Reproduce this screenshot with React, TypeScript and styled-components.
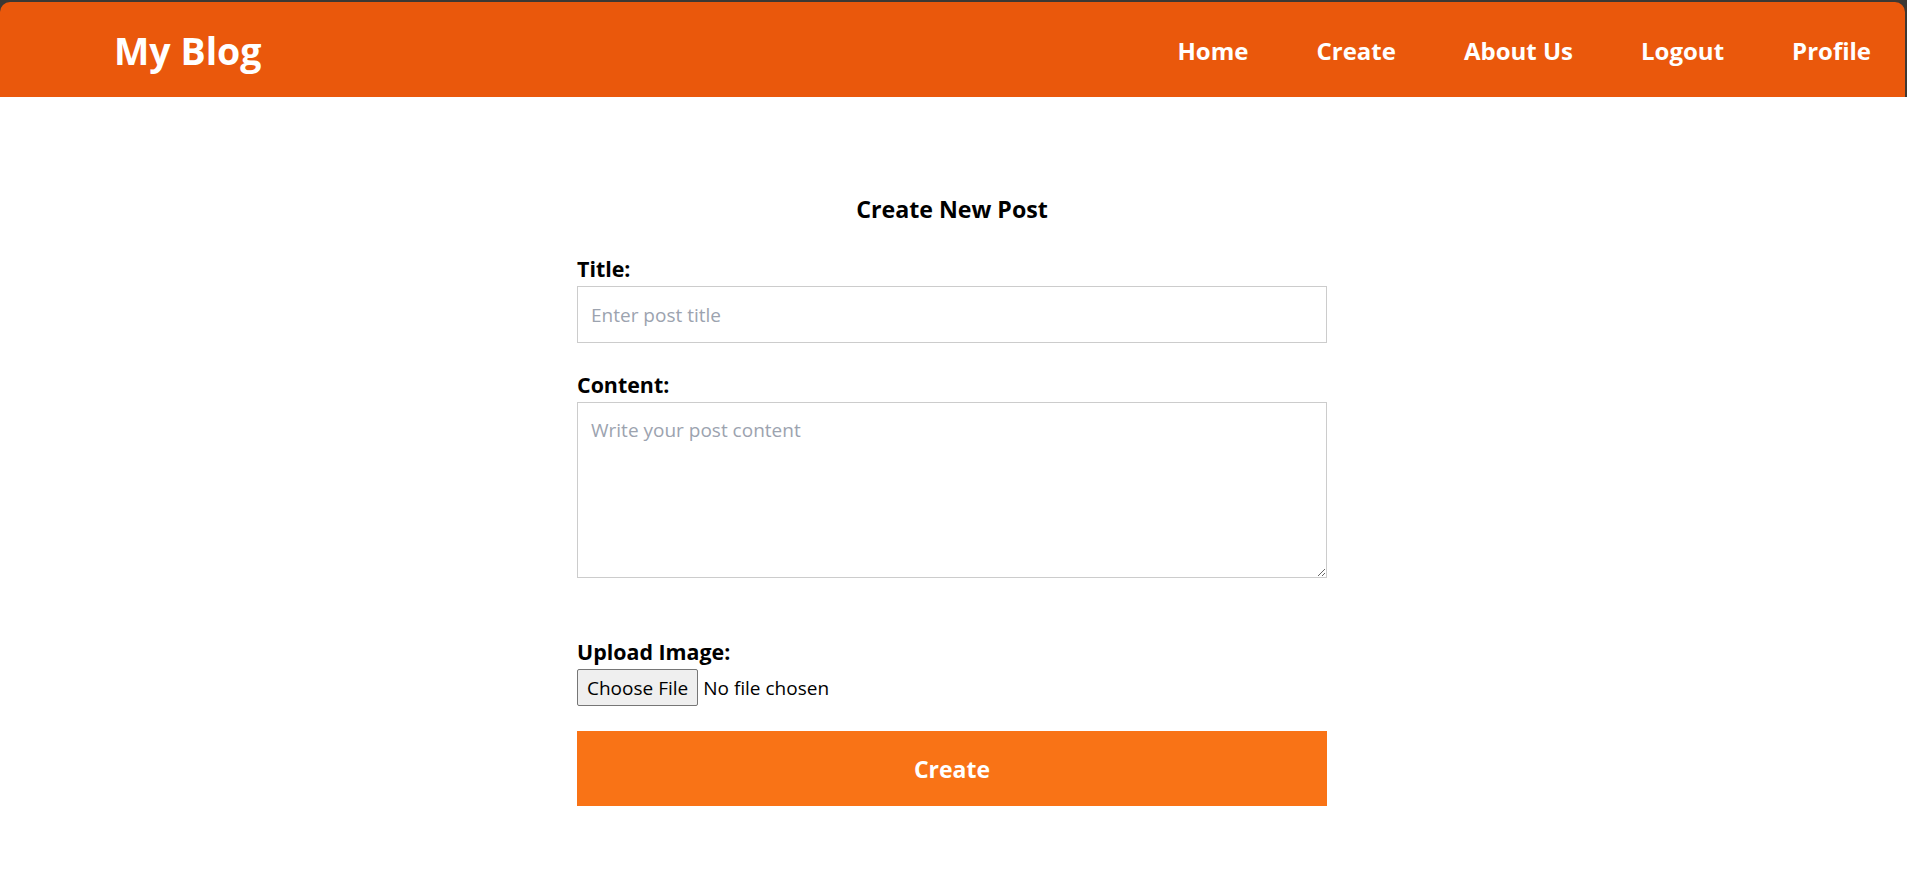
import React from "react";
import styled, { createGlobalStyle } from "styled-components";

const GlobalStyle = createGlobalStyle`
  html, body {
    margin: 0;
    padding: 0;
    background: #ffffff;
  }
  body {
    font-family: "Open Sans", "Noto Sans", sans-serif;
    color: #000000;
  }
  * {
    box-sizing: border-box;
  }
`;

const Frame = styled.div`
  background: #3c3834;
  padding: 2px 2px 0 0;
`;

const Header = styled.header`
  height: 95px;
  background: #ea580c;
  border-radius: 10px 10px 0 0;
  display: flex;
  align-items: center;
  justify-content: space-between;
  padding: 3px 34px 0 114px;
`;

const Brand = styled.a`
  color: #ffffff;
  font-size: 37.5px;
  font-weight: 700;
  line-height: 1;
  text-decoration: none;
`;

const Nav = styled.nav`
  display: flex;
  align-items: center;
  gap: 68px;
`;

const NavLink = styled.a`
  color: #ffffff;
  font-size: 24px;
  font-weight: 700;
  line-height: 1;
  text-decoration: none;
`;

const Main = styled.main`
  padding: 96px 3px 60px 0;
`;

const Form = styled.form`
  width: 750px;
  margin: 0 auto;
  display: flex;
  flex-direction: column;
`;

const Heading = styled.h2`
  margin: 0 0 30px;
  text-align: center;
  font-size: 23.2px;
  line-height: 32px;
  font-weight: 700;
`;

const Field = styled.div<{ $gap: number }>`
  display: flex;
  flex-direction: column;
  align-items: flex-start;
  margin-bottom: ${(p) => p.$gap}px;
`;

const Label = styled.label`
  display: block;
  font-size: 21.4px;
  font-weight: 700;
  line-height: 28px;
  margin-bottom: 3px;
`;

const TextInput = styled.input`
  width: 100%;
  height: 57px;
  border: 1px solid #cccccc;
  border-radius: 0;
  padding: 0 13px;
  font-family: inherit;
  font-size: 19px;
  color: #111111;
  outline: none;
  &::placeholder {
    color: #9ca3af;
  }
`;

const TextArea = styled.textarea`
  width: 100%;
  height: 176px;
  border: 1px solid #cccccc;
  border-radius: 0;
  padding: 14px 13px;
  font-family: inherit;
  font-size: 19px;
  line-height: 26px;
  color: #111111;
  outline: none;
  resize: both;
  &::placeholder {
    color: #9ca3af;
  }
`;

const FileInput = styled.input`
  font-family: inherit;
  font-size: 19px;
  height: 37px;
  line-height: 37px;
  color: #000000;
  &::file-selector-button {
    height: 37px;
    padding: 0 9px;
    margin-right: 5px;
    background: #efefef;
    border: 1px solid #767676;
    border-radius: 2px;
    font-family: inherit;
    font-size: 19px;
    color: #000000;
  }
`;

const SubmitButton = styled.button`
  width: 100%;
  height: 75px;
  border: none;
  background: #f97316;
  color: #ffffff;
  font-family: inherit;
  font-size: 23px;
  font-weight: 700;
  cursor: pointer;
`;

export default function App() {
  const links = ["Home", "Create", "About Us", "Logout", "Profile"];
  return (
    <>
      <GlobalStyle />
      <Frame>
        <Header>
          <Brand href="#">My Blog</Brand>
          <Nav>
            {links.map((l) => (
              <NavLink key={l} href="#">
                {l}
              </NavLink>
            ))}
          </Nav>
        </Header>
      </Frame>
      <Main>
        <Form onSubmit={(e) => e.preventDefault()}>
          <Heading>Create New Post</Heading>
          <Field $gap={28}>
            <Label htmlFor="title">Title:</Label>
            <TextInput id="title" type="text" placeholder="Enter post title" />
          </Field>
          <Field $gap={60}>
            <Label htmlFor="content">Content:</Label>
            <TextArea id="content" placeholder="Write your post content" />
          </Field>
          <Field $gap={25}>
            <Label htmlFor="image">Upload Image:</Label>
            <FileInput id="image" type="file" accept="image/*" />
          </Field>
          <SubmitButton type="submit">Create</SubmitButton>
        </Form>
      </Main>
    </>
  );
}
